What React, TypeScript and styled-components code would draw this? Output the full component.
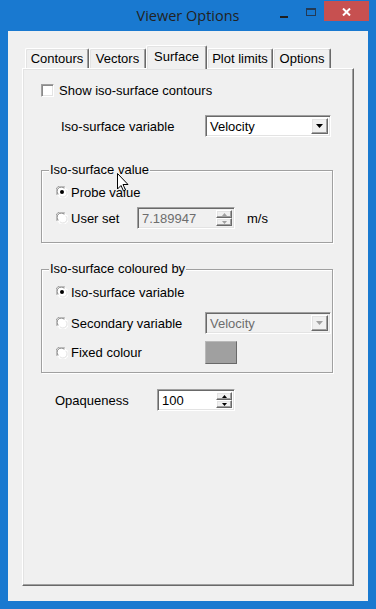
import React from "react";
import styled, { createGlobalStyle } from "styled-components";

const Global = createGlobalStyle`
  html, body { margin: 0; padding: 0; background: #1979d0; }
  * { box-sizing: border-box; }
`;

const Window = styled.div`
  position: relative;
  width: 376px;
  height: 609px;
  background: #1979d0;
  display: flex;
  flex-direction: column;
  font-family: "Liberation Sans", Arial, sans-serif;
  font-size: 13px;
  color: #000;
`;

const TitleBar = styled.div`
  height: 31px;
  display: grid;
  grid-template-columns: 1fr auto 1fr;
  align-items: start;
`;

const Title = styled.div`
  grid-column: 2;
  font-family: "Open Sans", "Noto Sans", sans-serif;
  font-size: 14.5px;
  line-height: 20px;
  padding-top: 6px;
  color: #222;
`;

const Caption = styled.div`
  grid-column: 3;
  justify-self: end;
  display: flex;
  margin: 1px 7px 0 0;
`;

const CapBtn = styled.div<{ $w: number; $close?: boolean }>`
  width: ${(p) => p.$w}px;
  height: 20px;
  display: flex;
  align-items: center;
  justify-content: center;
  background: ${(p) => (p.$close ? "#c75050" : "transparent")};
`;

const Client = styled.div`
  flex: 1;
  margin: 0 8px 8px;
  background: #f0f0f0;
  display: flex;
  flex-direction: column;
  padding: 14px 14px 15px 14px;
`;

const TabStrip = styled.div`
  display: flex;
  align-items: flex-end;
  height: 23px;
  padding-left: 3px;
`;

const Tab = styled.div<{ $w: number; $active?: boolean }>`
  position: relative;
  z-index: ${(p) => (p.$active ? 2 : 1)};
  width: ${(p) => p.$w}px;
  height: ${(p) => (p.$active ? 24 : 20)}px;
  margin-bottom: ${(p) => (p.$active ? -1 : 0)}px;
  background: #f0f0f0;
  border-top: 1px solid #fff;
  border-left: 1px solid #fff;
  border-right: 1px solid #696969;
  box-shadow: inset -1px 0 #a0a0a0, inset 1px 1px #e3e3e3;
  border-radius: 2px 2px 0 0;
  display: flex;
  justify-content: center;
  padding-top: ${(p) => (p.$active ? 3 : 2)}px;
  line-height: 15px;
  white-space: nowrap;
`;

const Panel = styled.div`
  flex: 1;
  border-top: 1px solid #fff;
  border-left: 1px solid #fff;
  border-right: 1px solid #696969;
  border-bottom: 1px solid #696969;
  box-shadow: inset -1px -1px #a0a0a0, inset 1px 1px #e3e3e3;
  padding: 15px 0 0 18px;
  display: flex;
  flex-direction: column;
  align-items: flex-start;
`;

const Row = styled.div<{ $mt?: number; $h: number; $pl?: number }>`
  display: flex;
  align-items: center;
  height: ${(p) => p.$h}px;
  margin-top: ${(p) => p.$mt ?? 0}px;
  padding-left: ${(p) => p.$pl ?? 0}px;
  white-space: nowrap;
`;

const Label = styled.span<{ $w?: number; $ml?: number; $disabled?: boolean }>`
  display: inline-block;
  width: ${(p) => (p.$w ? `${p.$w}px` : "auto")};
  margin-left: ${(p) => p.$ml ?? 0}px;
  line-height: 15px;
  color: ${(p) => (p.$disabled ? "#6d6d6d" : "#000")};
`;

const CheckBox = styled.span`
  width: 13px;
  height: 13px;
  background: #fff;
  border: 1px solid;
  border-color: #a0a0a0 #fff #fff #a0a0a0;
  box-shadow: inset 1px 1px #8a8a8a, inset -1px -1px #e3e3e3;
  margin-right: 5px;
`;

const Sunken = styled.div<{ $w: number; $h: number; $disabled?: boolean }>`
  width: ${(p) => p.$w}px;
  height: ${(p) => p.$h}px;
  background: ${(p) => (p.$disabled ? "#f0f0f0" : "#fff")};
  border: 1px solid;
  border-color: #a0a0a0 #fff #fff #a0a0a0;
  box-shadow: inset 1px 1px #696969, inset -1px -1px #e3e3e3;
  display: flex;
  align-items: stretch;
  padding: 2px 2px 2px 4px;
`;

const FieldText = styled.span<{ $disabled?: boolean }>`
  flex: 1;
  display: flex;
  align-items: center;
  line-height: 15px;
  color: ${(p) => (p.$disabled ? "#6d6d6d" : "#000")};
`;

const Raised = styled.div`
  background: #f0f0f0;
  border: 1px solid;
  border-color: #fff #696969 #696969 #fff;
  box-shadow: inset -1px -1px #a0a0a0, inset 1px 1px #e3e3e3;
  display: flex;
  align-items: center;
  justify-content: center;
`;

const ComboButton = styled(Raised)`
  width: 17px;
`;

const SpinButtons = styled.div`
  width: 16px;
  display: flex;
  flex-direction: column;
`;

const SpinHalf = styled(Raised)`
  flex: 1;
`;

const Group = styled.div<{ $mt: number; $pb: number }>`
  width: 292px;
  margin-top: ${(p) => p.$mt}px;
  border: 1px solid #a0a0a0;
  box-shadow: 1px 1px 0 #fff, inset 1px 1px 0 #fff;
  padding-bottom: ${(p) => p.$pb}px;
  display: flex;
  flex-direction: column;
`;

const GroupTitle = styled.div`
  width: fit-content;
  margin: -9px 0 0 7px;
  padding: 0 1px;
  background: #f0f0f0;
  line-height: 15px;
  height: 15px;
`;

const ColourButton = styled.div`
  width: 32px;
  height: 23px;
  background: #a0a0a0;
  border: 1px solid;
  border-color: #b9b9b9 #696969 #696969 #b9b9b9;
`;

const RadioIcon = styled.svg`
  flex: none;
  margin-right: 3px;
`;

const Cursor = styled.svg`
  position: absolute;
  left: 117px;
  top: 173px;
  pointer-events: none;
`;

const Radio: React.FC<{ checked?: boolean }> = ({ checked }) => (
  <RadioIcon width="12" height="12" viewBox="0 0 12 12">
    <circle cx="6" cy="6" r="5.5" fill="#fff" />
    <path d="M1.3 9 A5 5 0 0 1 9 1.3" stroke="#a0a0a0" strokeWidth="1" fill="none" />
    <path d="M2.3 8.3 A4 4 0 0 1 8.3 2.3" stroke="#7a7a7a" strokeWidth="1" fill="none" />
    <path d="M10.7 3 A5 5 0 0 1 3 10.7" stroke="#fff" strokeWidth="1" fill="none" />
    <path d="M9.7 3.8 A4 4 0 0 1 3.8 9.7" stroke="#e3e3e3" strokeWidth="1" fill="none" />
    {checked && <circle cx="6" cy="6" r="2" fill="#000" />}
  </RadioIcon>
);

const Arrow: React.FC<{ up?: boolean; small?: boolean; color: string }> = ({ up, small, color }) =>
  small ? (
    <svg width="5" height="3" viewBox="0 0 5 3">
      <path d={up ? "M2.5 0 L5 3 L0 3 Z" : "M0 0 L5 0 L2.5 3 Z"} fill={color} />
    </svg>
  ) : (
    <svg width="7" height="4" viewBox="0 0 7 4">
      <path d="M0 0 L7 0 L3.5 4 Z" fill={color} />
    </svg>
  );

const Combo: React.FC<{ value: string; disabled?: boolean }> = ({ value, disabled }) => (
  <Sunken $w={126} $h={22} $disabled={disabled}>
    <FieldText $disabled={disabled}>{value}</FieldText>
    <ComboButton>
      <Arrow color={disabled ? "#a0a0a0" : "#000"} />
    </ComboButton>
  </Sunken>
);

const Spin: React.FC<{ value: string; w: number; disabled?: boolean }> = ({ value, w, disabled }) => (
  <Sunken $w={w} $h={22} $disabled={disabled}>
    <FieldText $disabled={disabled}>{value}</FieldText>
    <SpinButtons>
      <SpinHalf>
        <Arrow up small color={disabled ? "#a0a0a0" : "#000"} />
      </SpinHalf>
      <SpinHalf>
        <Arrow small color={disabled ? "#a0a0a0" : "#000"} />
      </SpinHalf>
    </SpinButtons>
  </Sunken>
);

export default function App() {
  return (
    <>
      <Global />
      <Window>
        <TitleBar>
          <Title>Viewer Options</Title>
          <Caption>
            <CapBtn $w={26}>
              <svg width="8" height="14" viewBox="0 0 8 14">
                <rect x="0" y="12" width="8" height="2" fill="#1e1e1e" />
              </svg>
            </CapBtn>
            <CapBtn $w={27}>
              <svg width="10" height="8" viewBox="0 0 10 8" style={{ marginTop: 2 }}>
                <rect x="0.5" y="0.5" width="9" height="7" fill="none" stroke="#233a55" />
                <rect x="0" y="0" width="10" height="2" fill="#233a55" />
              </svg>
            </CapBtn>
            <CapBtn $w={45} $close>
              <svg width="9" height="8" viewBox="0 0 9 8" style={{ marginTop: 1 }}>
                <path d="M1 0.5 L8 7.5 M8 0.5 L1 7.5" stroke="#fff" strokeWidth="2" />
              </svg>
            </CapBtn>
          </Caption>
        </TitleBar>
        <Client>
          <TabStrip>
            <Tab $w={64}>Contours</Tab>
            <Tab $w={57}>Vectors</Tab>
            <Tab $w={61} $active>Surface</Tab>
            <Tab $w={66}>Plot limits</Tab>
            <Tab $w={58}>Options</Tab>
          </TabStrip>
          <Panel>
            <Row $h={13}>
              <CheckBox />
              <Label>Show iso-surface contours</Label>
            </Row>
            <Row $h={22} $mt={18}>
              <Label $w={144} $ml={20}>Iso-surface variable</Label>
              <Combo value="Velocity" />
            </Row>

            <Group $mt={33} $pb={13}>
              <GroupTitle>Iso-surface value</GroupTitle>
              <Row $h={16} $mt={7} $pl={14}>
                <Radio checked />
                <Label>Probe value</Label>
              </Row>
              <Row $h={22} $mt={7} $pl={14}>
                <Radio />
                <Label $w={66}>User set</Label>
                <Spin value="7.189947" w={98} disabled />
                <Label $ml={12}>m/s</Label>
              </Row>
            </Group>

            <Group $mt={26} $pb={8}>
              <GroupTitle>Iso-surface coloured by</GroupTitle>
              <Row $h={16} $mt={8} $pl={14}>
                <Radio checked />
                <Label>Iso-surface variable</Label>
              </Row>
              <Row $h={22} $mt={12} $pl={14}>
                <Radio />
                <Label $w={134}>Secondary variable</Label>
                <Combo value="Velocity" disabled />
              </Row>
              <Row $h={23} $mt={7} $pl={14}>
                <Radio />
                <Label $w={134}>Fixed colour</Label>
                <ColourButton />
              </Row>
            </Group>

            <Row $h={22} $mt={16}>
              <Label $w={102} $ml={14}>Opaqueness</Label>
              <Spin value="100" w={78} />
            </Row>
          </Panel>
        </Client>
        <Cursor width="12" height="19" viewBox="0 0 12 19">
          <path
            d="M0.5 0.5 L0.5 16 L4 12.5 L6.5 18 L8.5 17 L6 11.5 L11 11.5 Z"
            fill="#fff"
            stroke="#000"
            strokeWidth="1"
            strokeLinejoin="miter"
          />
        </Cursor>
      </Window>
    </>
  );
}
